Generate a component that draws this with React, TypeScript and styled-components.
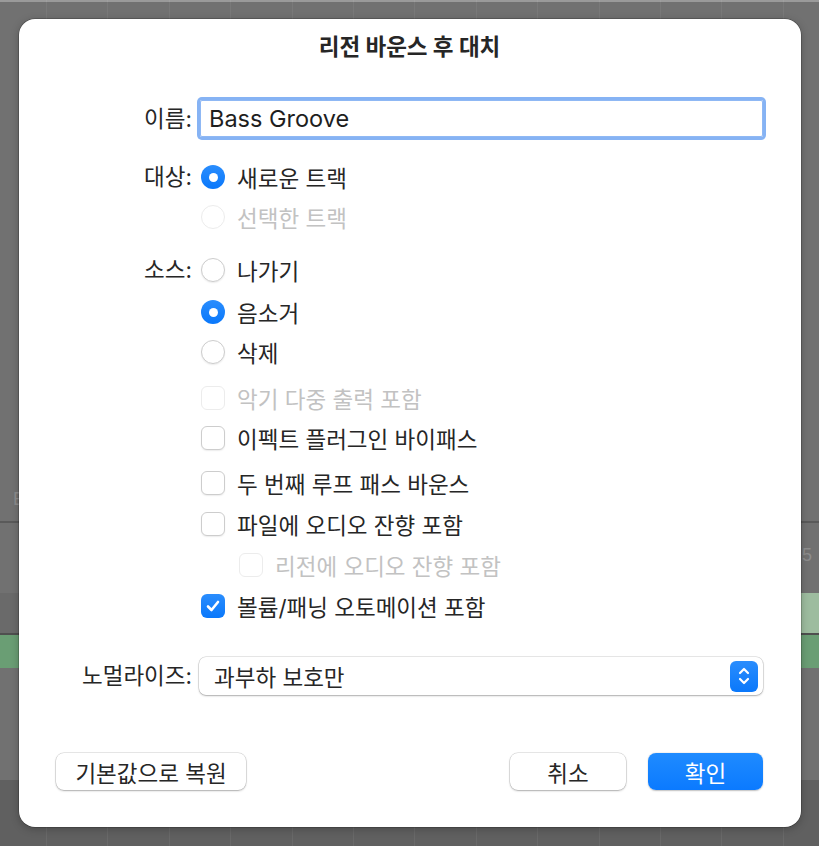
import styled, { createGlobalStyle } from "styled-components";

const FONT_SIZE = 22.5

const GlobalStyle = createGlobalStyle`
    html, body {
        margin: 0;
        padding: 0;
    }
    body {
        font-family: "Inter", "Noto Sans CJK KR", sans-serif;
        color: #262626;
    }
`

const sideBands = (light: string) => `linear-gradient(to bottom,
    transparent 0 521px, #5a5a5a 521px 523px, transparent 523px 593px,
    ${light} 593px 633px, #4f4f4f 633px 635px, #6a9e74 635px 668px, transparent 668px)`

const Backdrop = styled.div`
    width: 819px;
    height: 846px;
    padding: 19px 18px 19px 19px;
    box-sizing: border-box;
    background:
        linear-gradient(to bottom, #9a9a9a 0 2px, transparent 2px),
        ${sideBands("#6a6a6a")} left top / 19px 100% no-repeat,
        ${sideBands("#9dbc9f")} right top / 18px 100% no-repeat,
        linear-gradient(to bottom, #717171 0 780px, #606060 780px);
    position: relative;
`

const Gridlines = styled.div`
    position: absolute;
    inset: 0;
    background: repeating-linear-gradient(to right, transparent 0 46px, rgba(255,255,255,0.06) 46px 47px, transparent 47px 61.4px);
    pointer-events: none;
`

const StrayText = styled.span<{ $x: number, $y: number }>`
    position: absolute;
    left: ${({ $x }) => $x}px;
    top: ${({ $y }) => $y}px;
    font-family: "Liberation Sans", sans-serif;
    font-size: 18px;
    color: #8d8d8d;
`

const Dialog = styled.div`
    position: relative;
    width: 782px;
    height: 808px;
    box-sizing: border-box;
    background: #ffffff;
    border-radius: 16px;
    box-shadow: 0 0 0 0.5px rgba(0,0,0,0.35), 0 2px 8px rgba(0,0,0,0.25);
    padding: 15px 38px 37px 37px;
    display: flex;
    flex-direction: column;
`

const Title = styled.h1`
    margin: 0;
    text-align: center;
    font-size: ${FONT_SIZE}px;
    line-height: 26px;
    font-weight: 700;
    color: #262626;
`

const Form = styled.div`
    margin-top: 37px;
    display: flex;
    flex-direction: column;
`

const Field = styled.div<{ $mt?: number }>`
    display: grid;
    grid-template-columns: 136px 1fr;
    column-gap: 8px;
    align-items: start;
    margin-top: ${({ $mt }) => $mt ?? 0}px;
`

const Label = styled.div<{ $h: number }>`
    text-align: right;
    font-size: ${FONT_SIZE}px;
    line-height: ${({ $h }) => $h}px;
    white-space: nowrap;
`

const Options = styled.div`
    display: flex;
    flex-direction: column;
`

const NameInput = styled.div`
    height: 37px;
    margin-top: 3px;
    box-sizing: border-box;
    border: 1px solid #8fb8f4;
    box-shadow: 0 0 0 3px #86b3f4;
    border-radius: 2px;
    padding-left: 8px;
    display: flex;
    align-items: center;
    font-size: 23.5px;
    color: #1e1e1e;
`

const OptionRow = styled.label<{ $mt?: number, $indent?: number, $disabled?: boolean }>`
    height: 40px;
    display: flex;
    align-items: center;
    gap: 12px;
    margin-top: ${({ $mt }) => $mt ?? 0}px;
    padding-left: ${({ $indent }) => ($indent ?? 0) + 1}px;
    font-size: ${FONT_SIZE}px;
    color: ${({ $disabled }) => $disabled ? "#c2c2c2" : "#262626"};
    white-space: nowrap;
`

const Radio = styled.span<{ $on?: boolean, $disabled?: boolean }>`
    width: 24px;
    height: 24px;
    box-sizing: border-box;
    border-radius: 50%;
    flex: none;
    display: flex;
    align-items: center;
    justify-content: center;
    background: ${({ $on }) => $on ? "linear-gradient(#2a8dfd, #0a78fb)" : "#ffffff"};
    border: ${({ $on, $disabled }) => $on ? "none" : $disabled ? "1px solid #ececec" : "1px solid #cdcdcd"};
    box-shadow: ${({ $on, $disabled }) => $on || $disabled ? "none" : "0 1px 1.5px rgba(0,0,0,0.08)"};

    &::after {
        content: "";
        display: ${({ $on }) => $on ? "block" : "none"};
        width: 9px;
        height: 9px;
        border-radius: 50%;
        background: #ffffff;
    }
`

const Checkbox = styled.span<{ $on?: boolean, $disabled?: boolean }>`
    width: 24px;
    height: 24px;
    box-sizing: border-box;
    border-radius: 6px;
    flex: none;
    display: flex;
    align-items: center;
    justify-content: center;
    background: ${({ $on }) => $on ? "linear-gradient(#2a8dfd, #0a78fb)" : "#ffffff"};
    border: ${({ $on, $disabled }) => $on ? "none" : $disabled ? "1px solid #ececec" : "1px solid #cdcdcd"};
    box-shadow: ${({ $on, $disabled }) => $on || $disabled ? "none" : "0 1px 1.5px rgba(0,0,0,0.08)"};
`

const Select = styled.div`
    height: 38px;
    box-sizing: border-box;
    margin-left: -1px;
    border-radius: 7px;
    background: #ffffff;
    box-shadow: 0 0 0 0.5px rgba(0,0,0,0.18), 0 1px 2px rgba(0,0,0,0.25);
    display: flex;
    align-items: center;
    justify-content: space-between;
    padding: 0 5px 0 15px;
    font-size: ${FONT_SIZE}px;
`

const Stepper = styled.span`
    width: 28px;
    height: 31px;
    border-radius: 6px;
    background: linear-gradient(#2a8dfd, #0a78fb);
    display: flex;
    align-items: center;
    justify-content: center;
`

const Footer = styled.div`
    margin-top: auto;
    display: flex;
    align-items: center;
    gap: 22px;
`

const Button = styled.button<{ $primary?: boolean, $w: number }>`
    width: ${({ $w }) => $w}px;
    height: 37px;
    border: none;
    border-radius: 8px;
    font-family: inherit;
    font-size: ${FONT_SIZE}px;
    color: ${({ $primary }) => $primary ? "#ffffff" : "#262626"};
    background: ${({ $primary }) => $primary ? "linear-gradient(#1f8bff, #0b7aff)" : "#ffffff"};
    box-shadow: ${({ $primary }) => $primary
        ? "0 0.5px 1.5px rgba(0,0,0,0.25)"
        : "0 0 0 0.5px rgba(0,0,0,0.18), 0 1px 2px rgba(0,0,0,0.25)"};
    padding: 0;
`

const Spacer = styled.div`
    flex: 1;
`

const CheckMark = () => (
    <svg width="16" height="16" viewBox="0 0 16 16">
        <path d="M3 8.5 L6.5 12 L13 4" fill="none" stroke="#fff" strokeWidth="2.6" strokeLinecap="round" strokeLinejoin="round" />
    </svg>
)

const StepperArrows = () => (
    <svg width="14" height="22" viewBox="0 0 14 22">
        <path d="M3 8 L7 4 L11 8 M3 14 L7 18 L11 14" fill="none" stroke="#fff" strokeWidth="2.2" strokeLinecap="round" strokeLinejoin="round" />
    </svg>
)

type TCheck = { text: string, mt: number, on?: boolean, disabled?: boolean, indent?: number }

const checks: TCheck[] = [
    { text: "악기 다중 출력 포함", mt: 6, disabled: true },
    { text: "이펙트 플러그인 바이패스", mt: 0 },
    { text: "두 번째 루프 패스 바운스", mt: 5 },
    { text: "파일에 오디오 잔향 포함", mt: 1 },
    { text: "리전에 오디오 잔향 포함", mt: 1, disabled: true, indent: 38 },
    { text: "볼륨/패닝 오토메이션 포함", mt: 1, on: true },
]

export default function App() {
    return (
        <>
            <GlobalStyle />
            <Backdrop>
                <Gridlines />
                <StrayText $x={13} $y={489}>E</StrayText>
                <StrayText $x={802} $y={545}>5</StrayText>
                <Dialog>
                    <Title>리전 바운스 후 대치</Title>

                    <Form>
                        <Field>
                            <Label $h={43}>이름:</Label>
                            <NameInput>Bass Groove</NameInput>
                        </Field>

                        <Field $mt={17}>
                            <Label $h={40}>대상:</Label>
                            <Options>
                                <OptionRow><Radio $on />새로운 트랙</OptionRow>
                                <OptionRow $disabled><Radio $disabled />선택한 트랙</OptionRow>
                            </Options>
                        </Field>

                        <Field $mt={13}>
                            <Label $h={40}>소스:</Label>
                            <Options>
                                <OptionRow><Radio />나가기</OptionRow>
                                <OptionRow $mt={2}><Radio $on />음소거</OptionRow>
                                <OptionRow><Radio />삭제</OptionRow>
                                {checks.map(c => (
                                    <OptionRow key={c.text} $mt={c.mt} $indent={c.indent} $disabled={c.disabled}>
                                        <Checkbox $on={c.on} $disabled={c.disabled}>
                                            {c.on && <CheckMark />}
                                        </Checkbox>
                                        {c.text}
                                    </OptionRow>
                                ))}
                            </Options>
                        </Field>

                        <Field $mt={31}>
                            <Label $h={38}>노멀라이즈:</Label>
                            <Select>
                                과부하 보호만
                                <Stepper><StepperArrows /></Stepper>
                            </Select>
                        </Field>
                    </Form>

                    <Footer>
                        <Button $w={190}>기본값으로 복원</Button>
                        <Spacer />
                        <Button $w={116}>취소</Button>
                        <Button $w={115} $primary>확인</Button>
                    </Footer>
                </Dialog>
            </Backdrop>
        </>
    )
}
